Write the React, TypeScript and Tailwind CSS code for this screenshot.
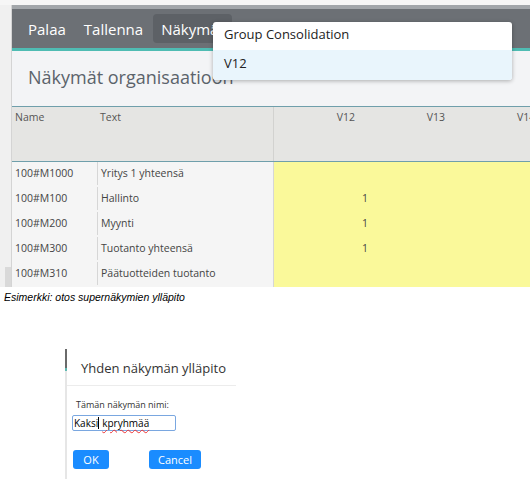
import React from 'react';

const rows = [
  { name: '100#M1000', text: 'Yritys 1 yhteensä', v: '' },
  { name: '100#M100', text: 'Hallinto', v: '1' },
  { name: '100#M200', text: 'Myynti', v: '1' },
  { name: '100#M300', text: 'Tuotanto yhteensä', v: '1' },
  { name: '100#M310', text: 'Päätuotteiden tuotanto', v: '' },
];

const sans = "font-['Open_Sans','Noto_Sans',sans-serif]";

const App: React.FC = () => {
  return (
    <div className="w-[530px] h-[480px] bg-white relative overflow-hidden">
      {/* screenshot of the views page */}
      <div className={`h-[287px] flex flex-col ${sans}`}>
        <div className="h-[5px] bg-[#f6f6f6]" />
        <div className="flex flex-1 min-h-0">
          <div className="w-[11px] shrink-0 bg-[#f0f0f0] flex flex-col justify-end">
            <div className="h-[20px] ml-[5px] bg-[#d9d9d9]" />
          </div>
          <div className="flex-1 flex flex-col border-l border-[#d4d4d4] bg-[#f3f4f6] min-w-0 overflow-hidden">
            <div className="h-[4px] bg-[#a2a6aa]" />
            <div className="h-[39px] bg-[#6c7075] flex items-center pl-[16px] text-white text-[15px]">
              <span className="mr-[18px] pt-[2px]">Palaa</span>
              <span className="mr-[10px] pt-[2px]">Tallenna</span>
              <span className="h-[29px] w-[79px] bg-[#5d6166] rounded-[4px] pl-[8px] flex items-center pt-[2px] overflow-hidden whitespace-nowrap">Näkymät</span>
            </div>
            <div className="h-[3px] bg-[#4fbcb3]" />
            <div className="h-[55px] pl-[16px] pt-[13px] text-[18px] text-[#5b636b] whitespace-nowrap">Näkymät organisaatioon</div>
            <div className="h-px bg-[#6f9fab]" />
            <div className="h-[54px] bg-[#e5e5e3] flex text-[10.5px] text-[#555]">
              <div className="w-[86px] shrink-0 pl-[3px] pt-[3px]">Name</div>
              <div className="w-[175px] shrink-0 pl-[2px] pt-[3px]">Text</div>
              <div className="flex-1 flex border-l border-[#d2d2d0] whitespace-nowrap">
                <div className="w-[81px] shrink-0 text-right pt-[3px]">V12</div>
                <div className="w-[90px] shrink-0 text-right pt-[3px]">V13</div>
                <div className="w-[90px] shrink-0 pl-[72px] pt-[3px]">V14</div>
              </div>
            </div>
            <div className="h-px bg-[#6f9fab]" />
            <div className="flex-1 flex text-[10.5px] text-[#444]">
              <div className="w-[261px] shrink-0 flex flex-col bg-[#f5f5f5]">
                {rows.map((r) => (
                  <div key={r.name} className="h-[25px] flex items-center pb-[2px]">
                    <div className="w-[86px] pl-[3px] h-full flex items-center border-r border-[#d6d6d6]">{r.name}</div>
                    <div className="pl-[3px]">{r.text}</div>
                  </div>
                ))}
              </div>
              <div className="flex-1 flex flex-col bg-[#faf99a] border-l border-[#d6d6d6]">
                {rows.map((r) => (
                  <div key={r.name} className="h-[25px] flex items-center pb-[2px]">
                    <div className="w-[94px] text-right">{r.v}</div>
                  </div>
                ))}
              </div>
            </div>
          </div>
        </div>
      </div>

      {/* dropdown menu */}
      <div className={`absolute left-[213px] top-[22px] w-[299px] bg-white rounded-[3px] shadow-[0_1px_4px_rgba(0,0,0,0.3)] text-[13px] text-[#222] ${sans}`}>
        <div className="h-[28px] pl-[11px] pb-[3px] flex items-center">Group Consolidation</div>
        <div className="h-[30px] pl-[11px] pb-[2px] flex items-center bg-[#e9f5fc] rounded-b-[3px]">V12</div>
      </div>

      <p className="pl-[4px] mt-[3px] text-[10.5px] italic text-black font-['Liberation_Sans',Arial,sans-serif]">
        Esimerkki: otos supernäkymien ylläpito
      </p>

      {/* dialog */}
      <div className={`mt-[43px] ml-[65px] w-[171px] h-[130px] border-l-2 border-[#e6e6e6] relative ${sans}`}>
        <div className="absolute -left-[2px] top-0 w-[2px] h-[19px] bg-[#6a6a6a]" />
        <div className="absolute -left-[2px] top-[19px] w-[2px] h-[3px] bg-[#5fb9b0]" />
        <div className="h-[37px] border-b border-[#ececec] pl-[14px] pt-[10px] text-[13px] text-[#333] whitespace-nowrap">Yhden näkymän ylläpito</div>
        <div className="pl-[9px] pt-[12px] text-[9px] text-[#333]">Tämän näkymän nimi:</div>
        <div className="ml-[5px] mt-[4px] w-[104px] h-[16px] border border-[#7aa7e0] rounded-[2px] flex items-center pl-[1px] text-[10px] text-black whitespace-nowrap">
          <span>Kaksi</span>
          <span className="w-px h-[12px] bg-black" />
          <span className="ml-[3px] underline decoration-wavy decoration-[#e33] decoration-1 underline-offset-2">kpryhmää</span>
        </div>
        <div className="flex pl-[6px] mt-[19px]">
          <div className="w-[36px] h-[19px] bg-[#1a8cff] rounded-[3px] text-white text-[11px] flex items-center justify-center">OK</div>
          <div className="ml-[40px] w-[52px] h-[19px] bg-[#1a8cff] rounded-[3px] text-white text-[11px] flex items-center justify-center">Cancel</div>
        </div>
      </div>
    </div>
  );
};

export default App;
